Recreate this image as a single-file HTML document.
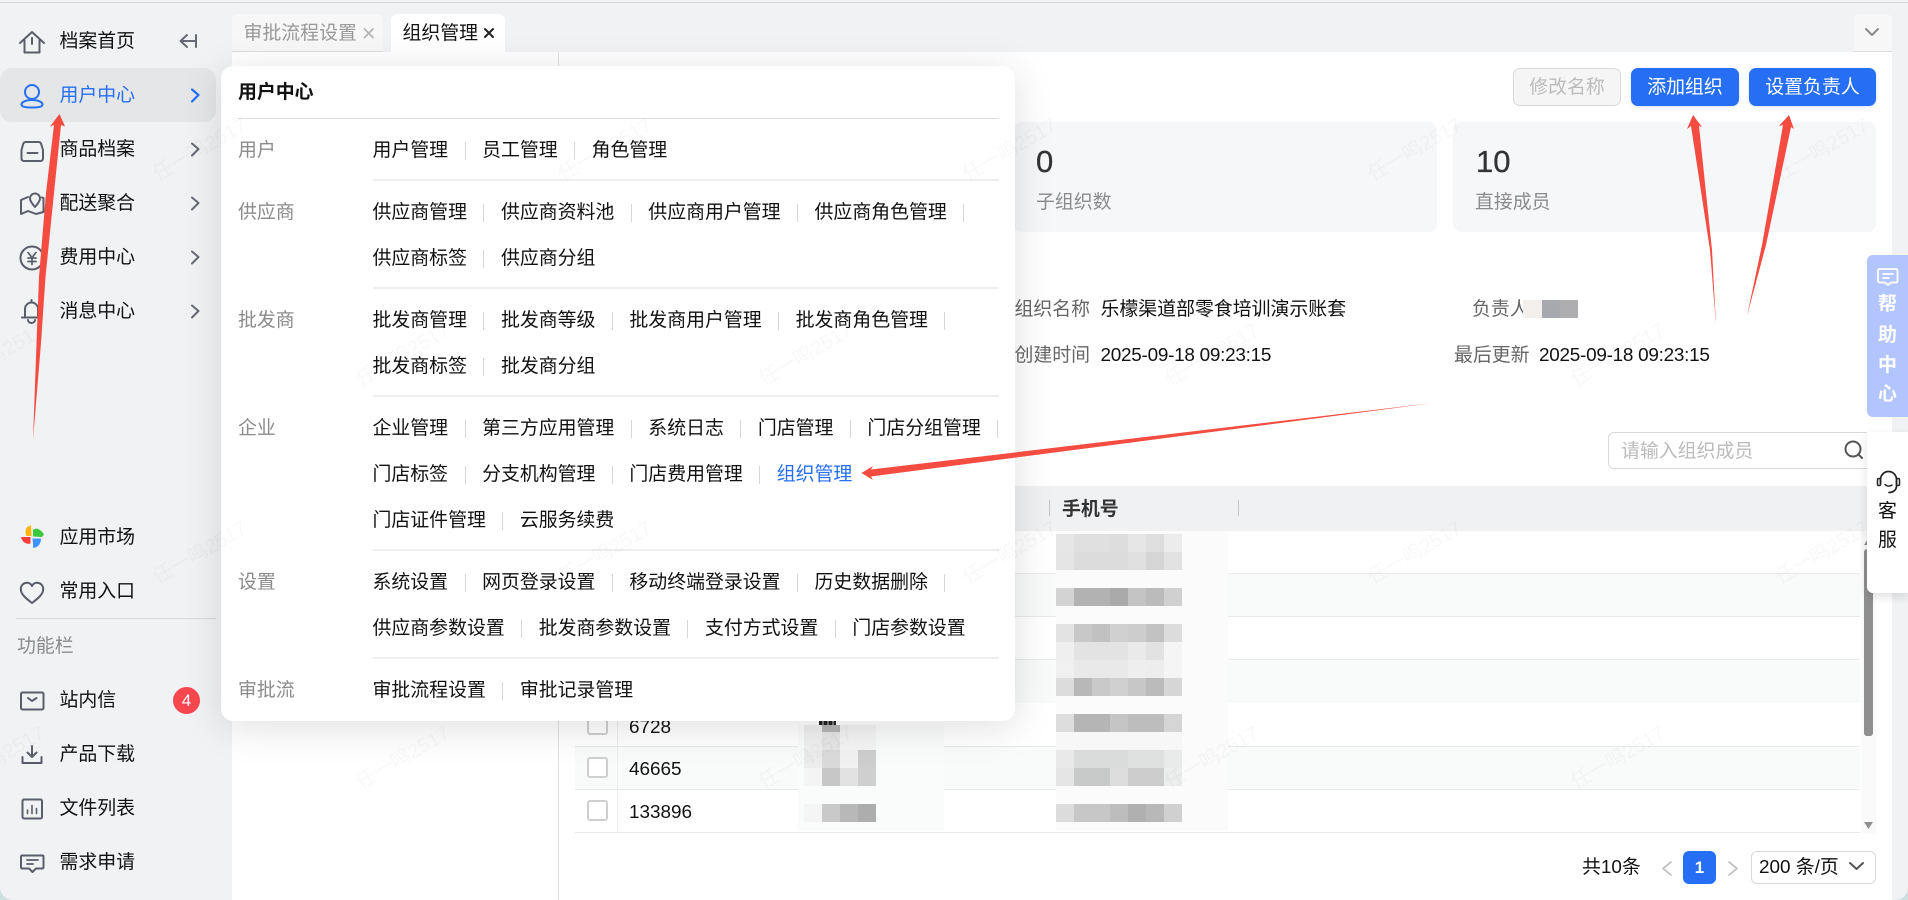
<!DOCTYPE html>
<html lang="zh">
<head>
<meta charset="utf-8">
<title>组织管理</title>
<style>
html,body{margin:0;padding:0;width:1908px;height:900px;overflow:hidden;background:#cfe0e0}
body{font-family:"Liberation Sans","Noto Sans CJK SC",sans-serif;font-size:18.9px;color:#111;position:relative}
#app{position:absolute;left:0;top:0;width:1908px;height:900px;background:#f1f2f4;border-radius:0 0 13px 13px;overflow:hidden}
.t{position:absolute;line-height:26px;height:26px;white-space:nowrap;margin-top:1px}
.b{position:absolute}
.g{color:#8b8b8b}
.lb{color:#666}
.r{position:absolute;left:372.500px;display:flex;align-items:center;height:26px;white-space:nowrap;line-height:26px;margin-top:1px}
.r i{display:block;width:1px;height:18px;background:#d8d8d8;margin:0 16.5px}
.dv{position:absolute;left:373px;width:626px;height:2px;background:#eeeeee}
.tr{position:absolute;left:575px;width:1285px;border-bottom:1px solid #e8e9ea;box-sizing:border-box}
.cb{position:absolute;left:587px;width:21px;height:21px;border:2px solid #cfcfcf;border-radius:3px;box-sizing:border-box;background:#fff}
.px{position:absolute;height:18px}
.btn{position:absolute;top:68px;height:38px;border-radius:7px;background:#266ff5;color:#fff;text-align:center;line-height:40px;box-shadow:0 1px 3px rgba(38,111,245,.2)}
.ch{position:absolute;width:41px;text-align:center;left:1867px;line-height:26px;height:26px;margin-top:1px}
svg{position:absolute;left:0;top:0;overflow:visible}
.wm{position:absolute;color:rgba(0,0,0,.028);font-size:20px;line-height:26px;white-space:nowrap;transform:translate(-50%,-50%) rotate(-30deg);width:110px;text-align:center}
</style>
</head>
<body>
<div id="app">
<!-- top line -->
<div class="b" style="left:0;top:0;width:1908px;height:2px;background:#f3f3f3"></div>
<div class="b" style="left:0;top:2px;width:1908px;height:1px;background:#d6d6d6"></div>

<!-- sidebar -->
<div class="b" style="left:0;top:68px;width:216px;height:54px;background:#e5e6e7;border-radius:12px"></div>
<div class="t" style="left:59.500px;top:28px">档案首页</div>
<div class="t" style="left:59.500px;top:82px;color:#266ff5">用户中心</div>
<div class="t" style="left:59.500px;top:136px">商品档案</div>
<div class="t" style="left:59.500px;top:190px">配送聚合</div>
<div class="t" style="left:59.500px;top:244px">费用中心</div>
<div class="t" style="left:59.500px;top:298px">消息中心</div>
<div class="t" style="left:59.500px;top:524px">应用市场</div>
<div class="t" style="left:59.500px;top:578px">常用入口</div>
<div class="b" style="left:16px;top:618px;width:200px;height:1px;background:#d8d9db"></div>
<div class="t g" style="left:17px;top:633px">功能栏</div>
<div class="t" style="left:59.500px;top:687px">站内信</div>
<div class="b" style="left:173px;top:687px;width:27px;height:27px;border-radius:50%;background:#f8474f;color:#fff;text-align:center;line-height:28px;font-size:17px">4</div>
<div class="t" style="left:59.500px;top:741px">产品下载</div>
<div class="t" style="left:59.500px;top:795px">文件列表</div>
<div class="t" style="left:59.500px;top:849px">需求申请</div>

<svg width="1908" height="900" fill="none" stroke="#5a5e6a" stroke-width="2" stroke-linecap="round" stroke-linejoin="round">
<!-- home -->
<path d="M20 43 32 32 44 43M24.500 40V52.500H39.500V40M32 38V44"/>
<path d="M181 41H195M187 35 180.500 41 187 47M196 35V47" stroke="#666a74"/>
<!-- user -->
<g stroke="#266ff5"><circle cx="32" cy="92" r="7"/><path d="M32 100C26 100 21.500 102 21.500 104.500S26 107.500 32 107.500 42.500 107 42.500 104.500 38 100 32 100Z"/><path d="M192 89.500 198.500 95 192 101.500" stroke-width="2.200"/></g>
<!-- product -->
<path d="M25.500 142H38.500C40 142 41 143 41.300 144.500L43 150V158.500C43 160 42 161 40.500 161H24C22.500 161 21.500 160 21.500 158.500V150L23 144.500C23.500 143 24 142 25.500 142Z"/><path d="M27.500 153H37.500"/>
<!-- map -->
<path d="M28 197 21 200V214L28 211 36 214 43.500 212V198L42 197.500"/><path d="M35 207C31.500 203 30 200.500 30 198.500A5 5 0 0 1 40 198.500C40 200.500 38.500 203 35 207Z"/>
<!-- yen -->
<circle cx="32" cy="258" r="11.500"/><path d="M28 252.500 32 257.500 36 252.500M28 258H36M28 261.500H36M32 257.500V264.500" stroke-width="1.700"/>
<!-- bell -->
<path d="M25 317V309A6.500 6.500 0 0 1 38 309V317M22 317.500H41M28 320A3.500 3 0 0 0 35 320M31.500 300V302"/>
<!-- chevrons -->
<path d="M192 143.500 198.500 149 192 155.500M192 197.500 198.500 203 192 209.500M192 251.500 198.500 257 192 263.500M192 305.500 198.500 311 192 317.500" stroke="#666a74"/>
<!-- pinwheel -->
<g stroke="none"><path d="M31 525.500C27 526 25.500 529 25.500 531.500 25.500 533 26 535 26.500 536H31.500Z" fill="#ffb400"/><path d="M33 536.500V530C36 527 40 529 43.500 533.500 44 535 43 537 41 537Z" fill="#3cc83c"/><path d="M32.500 538.500H41C41 544 38 547.500 33 548 33.500 545 32.500 541 32.500 538.500Z" fill="#3f95ff"/><path d="M21 537H30.500V543.500C27 544.500 22.500 543 21 537Z" fill="#fa3c3c"/></g>
<!-- heart -->
<path d="M32 603C24 597 20.800 593.500 20.800 589 20.800 585.500 23.500 582.800 27 582.800 29 582.800 31 584 32 586 33 584 35 582.800 37 582.800 40.500 582.800 43.200 585.500 43.200 589 43.200 593.500 40 597 32 603Z"/>
<!-- mail -->
<rect x="21" y="692.500" width="22.500" height="17" rx="1.500"/><path d="M28 698 32 701 36.500 698"/>
<!-- download -->
<path d="M32 746V757M27.500 752.500 32 757 36.500 752.500M22.500 757V763H41.500V757"/>
<!-- file -->
<rect x="22.500" y="799.500" width="19.500" height="19" rx="1.500"/><path d="M27.500 813.500V810M32 813.500V805.500M36.500 813.500V808.500" stroke-width="1.600"/>
<!-- chat -->
<path d="M22 855.500H42.500C43.300 855.500 43.500 856 43.500 856.500V867.500C43.500 868 43 868.500 42.500 868.500H36L32.500 872 29 868.500H22C21.500 868.500 21 868 21 867.500V856.500C21 856 21.500 855.500 22 855.500Z"/><path d="M27 860H38M27 864H33" stroke-width="1.800"/>
</svg>

<!-- tabs -->
<div class="b" style="left:232px;top:14px;width:151px;height:37px;background:#f7f7f8;border-radius:6px 6px 0 0;border-bottom:1px solid #dcdcdc"></div>
<div class="t" style="left:243.500px;top:20px;color:#999">审批流程设置</div>
<div class="b" style="left:391px;top:14px;width:114px;height:38px;background:#fff;border-radius:6px 6px 0 0"></div>
<div class="t" style="left:402.500px;top:20px">组织管理</div>
<div class="b" style="left:1854px;top:14px;width:38px;height:37px;background:#f7f7f8;border-radius:6px 6px 0 0;border-bottom:1px solid #dcdcdc"></div>

<!-- main -->
<div class="b" style="left:232px;top:52px;width:1660px;height:848px;background:#fff"></div>
<div class="b" style="left:558px;top:52px;width:1px;height:848px;background:#e2e2e2"></div>

<svg width="1908" height="900" fill="none" stroke-linecap="round" stroke-linejoin="round">
<path d="M364.500 29 373 37.500M373 29 364.500 37.500" stroke="#b5b5b5" stroke-width="1.800"/>
<path d="M485 29 493 37M493 29 485 37" stroke="#222" stroke-width="2"/>
<path d="M1866 29 1872 35 1878 29" stroke="#8a8a8a" stroke-width="2"/>
</svg>

<!-- buttons -->
<div class="btn" style="left:1513px;width:108px;background:#f5f5f5;border:1px solid #d9d9d9;box-sizing:border-box;color:#bcbcbc;box-shadow:none;line-height:38px">修改名称</div>
<div class="btn" style="left:1631px;width:108px">添加组织</div>
<div class="btn" style="left:1749px;width:127px">设置负责人</div>

<!-- cards -->
<div class="b" style="left:575px;top:122px;width:423px;height:110px;background:#f6f7f9;border-radius:8px"></div>
<div class="b" style="left:1014px;top:122px;width:423px;height:110px;background:#f6f7f9;border-radius:8px"></div>
<div class="b" style="left:1453px;top:122px;width:423px;height:110px;background:#f6f7f9;border-radius:8px"></div>
<div class="t" style="left:1036px;top:141px;height:40px;line-height:40px;font-size:31px;color:#333;-webkit-text-stroke:.3px #333">0</div>
<div class="t g" style="left:1036px;top:189px">子组织数</div>
<div class="t" style="left:1476px;top:141px;height:40px;line-height:40px;font-size:31px;color:#333;-webkit-text-stroke:.3px #333">10</div>
<div class="t g" style="left:1475px;top:189px">直接成员</div>

<!-- info -->
<div class="t lb" style="left:1014.500px;top:296px">组织名称</div>
<div class="t" style="left:1100.500px;top:296px">乐檬渠道部零食培训演示账套</div>
<div class="t lb" style="left:1014.500px;top:342px">创建时间</div>
<div class="t" style="left:1100.500px;top:342px;letter-spacing:-.25px">2025-09-18 09:23:15</div>
<div class="t lb" style="left:1472px;top:296px">负责人</div>
<div class="px" style="left:1523px;top:300px;width:55px;background:linear-gradient(90deg,#f2efec 19px,#a7a9ae 0 37px,#aeaeb0 0)"></div>
<div class="t lb" style="left:1454px;top:342px">最后更新</div>
<div class="t" style="left:1539px;top:342px;letter-spacing:-.25px">2025-09-18 09:23:15</div>

<!-- search -->
<div class="b" style="left:1608px;top:432px;width:268px;height:37px;border:1px solid #d9d9d9;border-radius:6px;box-sizing:border-box;background:#fff"></div>
<div class="t" style="left:1621px;top:438px;color:#bbb">请输入组织成员</div>
<svg width="1908" height="900" fill="none"><circle cx="1853" cy="449" r="7.500" stroke="#555" stroke-width="2"/><path d="M1858.500 454.500 1862 458" stroke="#555" stroke-width="2" stroke-linecap="round"/></svg>

<!-- table -->
<div class="b" style="left:575px;top:486px;width:1301px;height:45px;background:#f0f1f3"></div>
<div class="b" style="left:1049px;top:500px;width:1px;height:16px;background:#c4c4c4"></div>
<div class="b" style="left:1238px;top:500px;width:1px;height:16px;background:#c4c4c4"></div>
<div class="t" style="left:1062px;top:496px;font-weight:700;color:#333">手机号</div>
<div class="tr" style="top:531px;height:43px"></div>
<div class="tr" style="top:574px;height:43px;background:#f9fafa"></div>
<div class="tr" style="top:617px;height:43px"></div>
<div class="tr" style="top:660px;height:43px;background:#f9fafa;border-bottom:0"></div>
<div class="tr" style="top:703px;height:44px"></div>
<div class="tr" style="top:747px;height:43px;background:#f9fafa"></div>
<div class="tr" style="top:790px;height:43px"></div>
<div class="b" style="left:617px;top:703px;width:1px;height:130px;background:#ececec"></div>
<div class="cb" style="top:714px"></div>
<div class="cb" style="top:757px"></div>
<div class="cb" style="top:800px"></div>
<div class="t" style="left:629px;top:714px">6728</div>
<div class="t" style="left:629px;top:756px">46665</div>
<div class="t" style="left:629px;top:799px">133896</div>

<!-- name mosaic -->
<div class="b" style="left:798px;top:725px;width:146px;height:105px;background:#fafbfb"></div>
<div class="b" style="left:819px;top:721px;width:17px;height:4px;background:repeating-linear-gradient(90deg,#222 0 3px,#777 0 5px)"></div>
<div class="px" style="left:804px;top:725px;width:72px;height:7px;background:linear-gradient(90deg,#eeeeee 18px,#b5b5b5 0 36px,#f3f3f3 0)"></div>
<div class="px" style="left:804px;top:732px;width:72px;background:linear-gradient(90deg,#f0f0f0 18px,#e6e6e6 0 36px,#f4f4f4 0)"></div>
<div class="px" style="left:804px;top:750px;width:72px;background:linear-gradient(90deg,#ececec 18px,#dadada 0 36px,#f1f1f1 0 54px,#cdcdcd 0)"></div>
<div class="px" style="left:804px;top:768px;width:72px;background:linear-gradient(90deg,#f4f4f4 18px,#c7c7c7 0 36px,#e2e2e2 0 54px,#cfcfcf 0)"></div>
<div class="px" style="left:804px;top:804px;width:72px;background:linear-gradient(90deg,#f5f5f5 18px,#c9c9c9 0 36px,#b8b8b8 0 54px,#adadad 0)"></div>

<!-- phone mosaic -->
<div class="b" style="left:1056px;top:531px;width:172px;height:299px;background:#fbfbfb"></div>
<div class="px" style="left:1056px;top:534px;width:126px;background:linear-gradient(90deg,#e6e6e6 18px,#e0e0e0 0 54px,#dddddd 0 72px,#e6e6e6 0 90px,#dedede 0 108px,#ececec 0)"></div>
<div class="px" style="left:1056px;top:552px;width:126px;background:linear-gradient(90deg,#e5e5e5 18px,#dcdcdc 0 72px,#e0e0e0 0 90px,#d5d5d5 0 108px,#e2e2e2 0)"></div>
<div class="px" style="left:1056px;top:588px;width:126px;background:linear-gradient(90deg,#d3d3d3 18px,#b2b2b2 0 54px,#aaaaaa 0 72px,#c4c4c4 0 90px,#bbbbbb 0 108px,#d0d0d0 0)"></div>
<div class="px" style="left:1056px;top:624px;width:126px;background:linear-gradient(90deg,#e3e3e3 18px,#c8c8c8 0 36px,#c1c1c1 0 54px,#d0d0d0 0 72px,#cdcdcd 0 90px,#c2c2c2 0 108px,#dcdcdc 0)"></div>
<div class="px" style="left:1056px;top:642px;width:126px;background:linear-gradient(90deg,#efefef 18px,#e3e3e3 0 72px,#eaeaea 0 90px,#e2e2e2 0 108px,#f5f5f5 0)"></div>
<div class="px" style="left:1056px;top:660px;width:126px;background:linear-gradient(90deg,#f0f0f0 18px,#e9e9e9 0 72px,#eeeeee 0 90px,#ededed 0 108px,#f5f5f5 0)"></div>
<div class="px" style="left:1056px;top:678px;width:126px;background:linear-gradient(90deg,#dcdcdc 18px,#b8b8b8 0 36px,#c9c9c9 0 54px,#d0d0d0 0 72px,#c7c7c7 0 90px,#bbbbbb 0 108px,#d6d6d6 0)"></div>
<div class="px" style="left:1056px;top:714px;width:126px;background:linear-gradient(90deg,#dddddd 18px,#b5b5b5 0 54px,#c5c5c5 0 72px,#bdbdbd 0 108px,#d5d5d5 0)"></div>
<div class="px" style="left:1056px;top:732px;width:126px;background:#f7f7f7"></div>
<div class="px" style="left:1056px;top:750px;width:126px;background:linear-gradient(90deg,#e8e9e8 18px,#dadcdb 0 72px,#dfe1e0 0 108px,#e9ebea 0)"></div>
<div class="px" style="left:1056px;top:768px;width:126px;background:linear-gradient(90deg,#e4e5e4 18px,#c8caca 0 36px,#c8caca 0 54px,#dddddd 0 72px,#cccccc 0 108px,#eceeed 0)"></div>
<div class="px" style="left:1056px;top:804px;width:126px;background:linear-gradient(90deg,#dcdcdc 18px,#c7c7c7 0 54px,#bdbdbd 0 72px,#b0b0b0 0 90px,#b8b8b8 0 108px,#d0d0d0 0)"></div>

<!-- scrollbar -->
<div class="b" style="left:1861px;top:531px;width:15px;height:303px;background:#fafafa"></div>
<div class="b" style="left:1864px;top:549px;width:9px;height:187px;background:#8f8f8f;border-radius:3px"></div>
<svg width="1908" height="900"><path d="M1864 829 1868.500 822 1873 829" transform="rotate(180 1868.500 825.500)" fill="#8f8f8f"/><path d="M1864 545 1868.500 538 1873 545" fill="#8f8f8f"/></svg>

<!-- pagination -->
<div class="t" style="left:1582px;top:854px">共10条</div>
<div class="b" style="left:1683px;top:851px;width:33px;height:33px;border-radius:6px;background:#266ff5;color:#fff;text-align:center;line-height:33px;font-size:17px;font-weight:700">1</div>
<div class="b" style="left:1751px;top:851px;width:125px;height:33px;border:1px solid #d9d9d9;border-radius:6px;box-sizing:border-box;background:#fff"></div>
<div class="t" style="left:1759px;top:854px">200 条/页</div>
<svg width="1908" height="900" fill="none" stroke-linecap="round" stroke-linejoin="round">
<path d="M1671 862 1663 868.500 1671 875M1729 862 1737 868.500 1729 875" stroke="#c4c4c4" stroke-width="1.800"/>
<path d="M1850 863 1856.500 869 1863 863" stroke="#555" stroke-width="2"/>
</svg>

<!-- popup -->
<div class="b" style="left:221px;top:66px;width:794px;height:655px;background:#fff;border-radius:12px;box-shadow:0 6px 40px rgba(0,0,0,.13)"></div>
<div class="t" style="left:238px;top:79px;font-weight:700;color:#111">用户中心</div>
<div class="b" style="left:238px;top:118px;width:761px;height:1px;background:#dddddd"></div>
<div class="t g" style="left:238px;top:137px">用户</div>
<div class="t g" style="left:238px;top:199px">供应商</div>
<div class="t g" style="left:238px;top:307px">批发商</div>
<div class="t g" style="left:238px;top:415px">企业</div>
<div class="t g" style="left:238px;top:569px">设置</div>
<div class="t g" style="left:238px;top:677px">审批流</div>

<div class="r" style="top:137px">用户管理<i></i>员工管理<i></i>角色管理</div>
<div class="dv" style="top:179px"></div>
<div class="r" style="top:199px">供应商管理<i></i>供应商资料池<i></i>供应商用户管理<i></i>供应商角色管理<i></i></div>
<div class="r" style="top:245px">供应商标签<i></i>供应商分组</div>
<div class="dv" style="top:287px"></div>
<div class="r" style="top:307px">批发商管理<i></i>批发商等级<i></i>批发商用户管理<i></i>批发商角色管理<i></i></div>
<div class="r" style="top:353px">批发商标签<i></i>批发商分组</div>
<div class="dv" style="top:395px"></div>
<div class="r" style="top:415px">企业管理<i></i>第三方应用管理<i></i>系统日志<i></i>门店管理<i></i>门店分组管理<i></i></div>
<div class="r" style="top:461px">门店标签<i></i>分支机构管理<i></i>门店费用管理<i></i><span style="color:#266ff5">组织管理</span></div>
<div class="r" style="top:507px">门店证件管理<i></i>云服务续费</div>
<div class="dv" style="top:549px"></div>
<div class="r" style="top:569px">系统设置<i></i>网页登录设置<i></i>移动终端登录设置<i></i>历史数据删除<i></i></div>
<div class="r" style="top:615px">供应商参数设置<i></i>批发商参数设置<i></i>支付方式设置<i></i>门店参数设置</div>
<div class="dv" style="top:657px"></div>
<div class="r" style="top:677px">审批流程设置<i></i>审批记录管理</div>

<!-- right float panels -->
<div class="b" style="left:1867px;top:255px;width:41px;height:162px;background:#b3c5ff;border-radius:6px 0 0 6px"></div>
<div class="ch" style="top:291px;color:#fff;font-weight:700">帮</div>
<div class="ch" style="top:322px;color:#fff;font-weight:700">助</div>
<div class="ch" style="top:352px;color:#fff;font-weight:700">中</div>
<div class="ch" style="top:381px;color:#fff;font-weight:700">心</div>
<div class="b" style="left:1867px;top:432px;width:41px;height:161px;background:#fff;border-radius:0 0 0 6px;box-shadow:0 4px 10px rgba(0,0,0,.12)"></div>
<div class="ch" style="top:498px">客</div>
<div class="ch" style="top:527px">服</div>
<svg width="1908" height="900" fill="none" stroke-linecap="round" stroke-linejoin="round">
<path d="M1879.500 269H1896C1896.800 269 1897.500 269.500 1897.500 270.500V281C1897.500 281.800 1897 282.500 1896 282.500H1891L1888 285 1885 282.500H1879.500C1878.700 282.500 1878 281.800 1878 281V270.500C1878 269.500 1878.700 269 1879.500 269Z" stroke="#fff" stroke-width="1.800"/>
<path d="M1883 274H1893M1883 278H1889" stroke="#fff" stroke-width="1.800"/>
<path d="M1880.500 483V479.500A8 8 0 0 1 1896.500 479.500V486C1896.500 489.500 1893.500 492.500 1889 492.500" stroke="#222" stroke-width="1.700"/>
<rect x="1877.500" y="478.500" width="3" height="7" rx="1.300" stroke="#222" stroke-width="1.500"/>
<rect x="1896.500" y="478.500" width="3" height="7" rx="1.300" stroke="#222" stroke-width="1.500"/>
<path d="M1885 484.500C1887 486.500 1890 486.500 1892 485" stroke="#222" stroke-width="1.500"/>
</svg>

<!-- watermarks -->
<div class="wm" style="left:200px;top:150px">任一鸣2517</div><div class="wm" style="left:605px;top:150px">任一鸣2517</div><div class="wm" style="left:1010px;top:150px">任一鸣2517</div><div class="wm" style="left:1415px;top:150px">任一鸣2517</div><div class="wm" style="left:1822px;top:150px">任一鸣2517</div>
<div class="wm" style="left:-2px;top:355px">任一鸣2517</div><div class="wm" style="left:403px;top:355px">任一鸣2517</div><div class="wm" style="left:806px;top:355px">任一鸣2517</div><div class="wm" style="left:1212px;top:355px">任一鸣2517</div><div class="wm" style="left:1618px;top:355px">任一鸣2517</div>
<div class="wm" style="left:200px;top:553px">任一鸣2517</div><div class="wm" style="left:605px;top:553px">任一鸣2517</div><div class="wm" style="left:1010px;top:553px">任一鸣2517</div><div class="wm" style="left:1415px;top:553px">任一鸣2517</div><div class="wm" style="left:1822px;top:553px">任一鸣2517</div>
<div class="wm" style="left:-2px;top:758px">任一鸣2517</div><div class="wm" style="left:403px;top:758px">任一鸣2517</div><div class="wm" style="left:806px;top:758px">任一鸣2517</div><div class="wm" style="left:1212px;top:758px">任一鸣2517</div><div class="wm" style="left:1618px;top:758px">任一鸣2517</div>

<!-- red arrows -->
<svg width="1908" height="900" fill="#f44c40" stroke="none">
<polygon points="33,440 36.500,343 39,277 46,193 54,125 50,126.500 59.500,114 65,126.500 61,125 54,193 45.500,277 41,343"/>
<polygon points="1716,325 1710,250 1691,126 1687,129 1693,115 1702,127 1699,126 1712,250"/>
<polygon points="1747,316 1762,245 1783,125 1779,126 1789,115 1794,129 1791,127 1766,245"/>
<polygon points="1433,403 1200,430.500 871,469.500 873,466 861.500,473 873,480 871,476.500 1200,433.500"/>
</svg>
</div>
</body>
</html>
